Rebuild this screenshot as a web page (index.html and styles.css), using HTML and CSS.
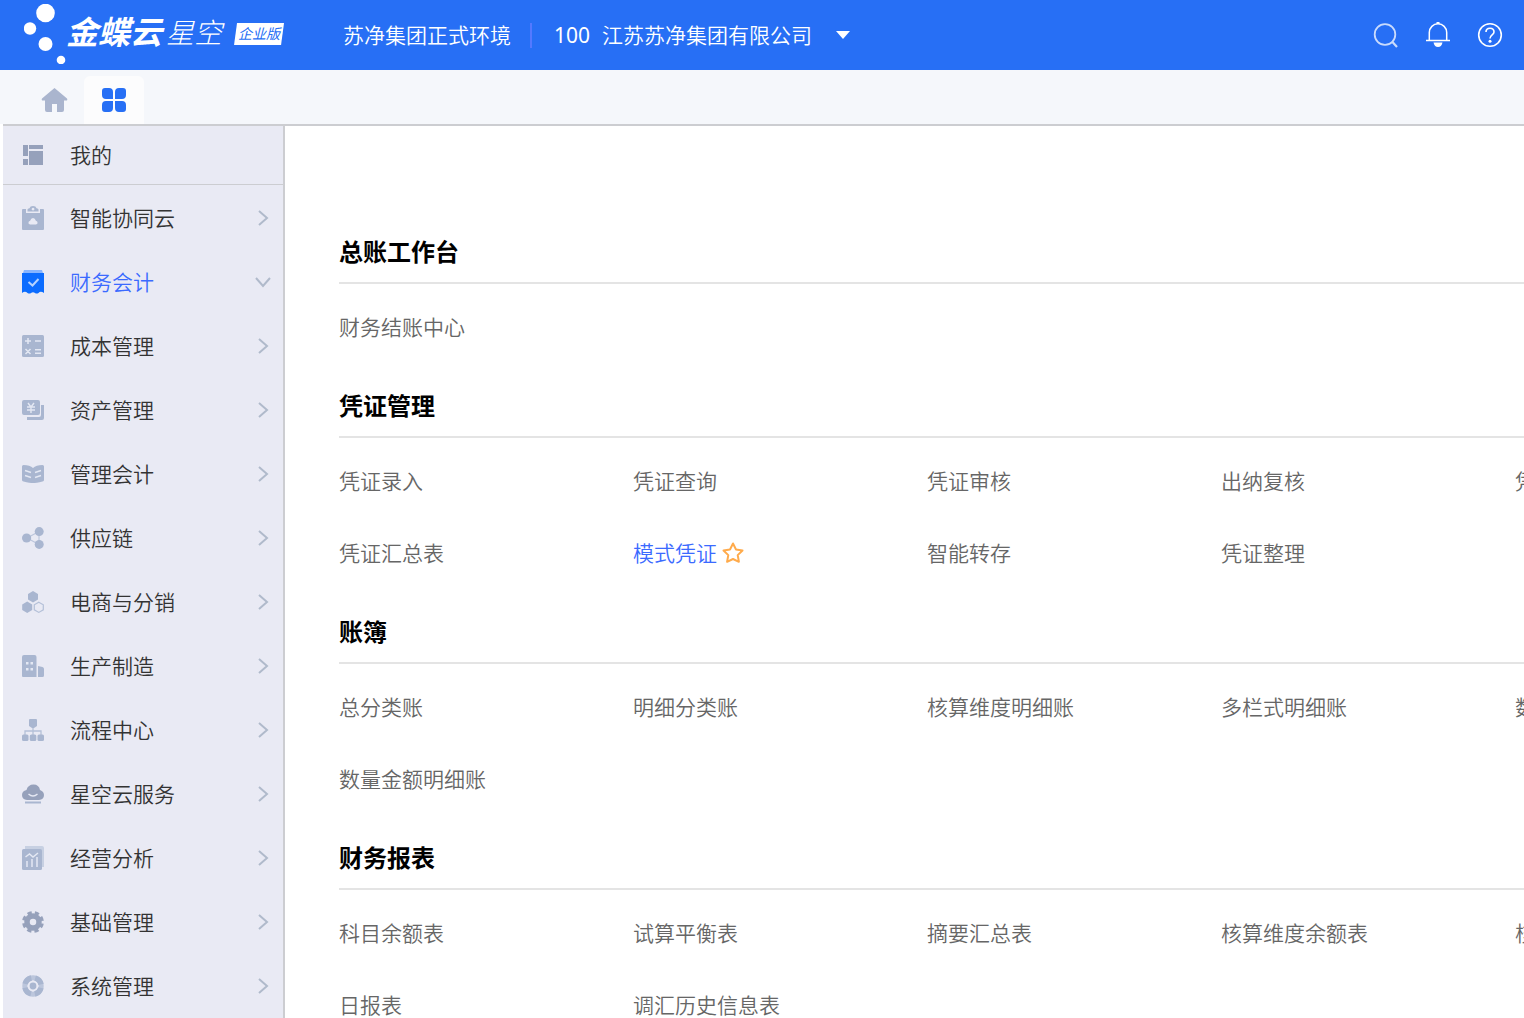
FILE: index.html
```html
<!DOCTYPE html>
<html lang="zh-CN">
<head>
<meta charset="utf-8">
<meta name="viewport" content="width=device-width, initial-scale=1">
<title>金蝶云星空</title>
<link rel="stylesheet" href="styles.css">
</head>
<body>
<svg class="defs" aria-hidden="true">
  <symbol id="right" viewBox="0 0 16 16"><path d="M4 1l8 7-8 7" fill="none" stroke="currentColor" stroke-width="2"/></symbol>
  <symbol id="down" viewBox="0 0 16 16"><path d="M1 4l7 8 7-8" fill="none" stroke="currentColor" stroke-width="2"/></symbol>
</svg>
<header class="header">
  <a class="brand" href="#">
    <svg class="brand-dots" viewBox="0 0 42 60" fill="#fff"><circle cx="21.500" cy="9" r="9.300"/><circle cx="6" cy="24.500" r="6.200"/><circle cx="21.500" cy="40" r="7"/><circle cx="37" cy="56" r="4.300"/></svg>
    <span class="brand-name">金蝶云</span>
    <span class="brand-sub">星空</span>
    <span class="brand-badge">企业版</span>
  </a>
  <span class="env">苏净集团正式环境</span>
  <button class="org" type="button"><span class="org-code">100</span><span>江苏苏净集团有限公司</span><svg class="caret" viewBox="0 0 14 8"><path d="M0 0h14L7 8z" fill="#fff"/></svg></button>
  <nav class="tools" aria-label="工具">
    <button type="button" aria-label="搜索"><svg viewBox="0 0 26 26" fill="none" stroke="#fff" opacity=".75"><circle cx="12" cy="12.500" r="10.300" stroke-width="1.800"/><path d="M19 19.500l5 5.500" stroke-width="2.200"/></svg></button>
    <button type="button" aria-label="消息"><svg viewBox="0 0 26 26" fill="none" stroke="#fff" stroke-width="1.500"><path d="M4.300 18.500V10.500a8.700 8.700 0 0 1 17.400 0v8M1 18.500h24"/><path d="M11.500 1h3" stroke-width="2"/><path d="M8.500 20.500h9q-1 4.500-4.500 4.500t-4.500-4.500z" fill="#fff" stroke="none"/></svg></button>
    <button type="button" aria-label="帮助"><svg viewBox="0 0 26 26" fill="none" stroke="#fff" stroke-width="1.600"><circle cx="13" cy="13" r="11.300"/><path d="M9 10c0-5 8-5 8 0 0 3-4 3-4 6.500"/><circle cx="13" cy="19.300" r="1.500" fill="#fff" stroke="none"/></svg></button>
  </nav>
</header>
<nav class="tabs" aria-label="页签">
  <a class="tab" href="#" aria-label="首页"><svg viewBox="0 0 26 26" fill="#aab5ce"><path d="M13.500 1L26 11.500q1 2-1 2H23V23q0 2-2 2h-5v-8h-5v8H6q-2 0-2-2v-9.500H2q-2 0-1-2z"/></svg></a>
  <a class="tab tab-active" href="#" aria-label="全部应用"><svg viewBox="0 0 26 26" fill="#276ff5"><path d="M4 1h4q4 0 4 4v7H5q-4 0-4-4V4q0-3 3-3zM22 1h-4q-4 0-4 4v7h7q4 0 4-4V4q0-3-3-3zM4 25h4q4 0 4-4v-7H5q-4 0-4 4v4q0 3 3 3zM22 25h-4q-4 0-4-4v-7h7q4 0 4 4v4q0 3-3 3z"/></svg></a>
</nav>
<div class="body">
  <nav class="side" aria-label="应用菜单">
    <a class="item item-mine" href="#"><svg class="icon" viewBox="0 0 22 22" fill="#96a1bb"><path d="M1 1h5v11H1zM1 15h5v6H1zM7 1h14v4H7zM7 7h14v14H7z"/></svg><span>我的</span></a>
    <a class="item" href="#"><svg class="icon" viewBox="0 0 22 24"><path fill="#a9b6d0" d="M1 3h3v4h14V3h3q1 0 1 1v19q0 1-1 1H1q-1 0-1-1V4q0-1 1-1z"/><path fill="#a9b6d0" fill-rule="evenodd" d="M5.500 5.500V3.500q0-1 2-1.200Q8 0 11 0t3.500 2.300q2 .2 2 1.200v2zM11 1.700a1.400 1.400 0 1 0 .1 0z"/><path fill="#e9eaf4" d="M8 18.500q-2-.5-1.500-2.200.3-1.200 1.500-1.200Q9 12 11 12t3 3.100q1.200 0 1.500 1.200.5 1.700-1.500 2.200z"/></svg><span>智能协同云</span><svg class="arrow"><use href="#right"/></svg></a>
    <a class="item item-active" href="#"><svg class="icon" viewBox="0 0 22 24"><path fill="#87b5ff" d="M2 0h18l1 3H1z"/><path fill="#0b6cff" d="M0 3h22v20q-3.500-2.500-5.500 0-2 1.200-3.500 0-2-1.500-4 0-1.500 1.200-3.500 0Q3 20.500 0 23z"/><path fill="none" stroke="#b4d2ff" stroke-width="2" d="M6.500 12l4 3.500 6-6.500"/></svg><span>财务会计</span><svg class="arrow"><use href="#down"/></svg></a>
    <a class="item" href="#"><svg class="icon" viewBox="0 0 22 22"><rect width="22" height="22" rx="1.500" fill="#a9b6d0"/><path stroke="#e4e8f3" stroke-width="1.500" d="M3 6h6M6 3v6M13 6h6M3.500 14l5 5M8.500 14l-5 5M13 14.800h6M13 18.200h6"/></svg><span>成本管理</span><svg class="arrow"><use href="#right"/></svg></a>
    <a class="item" href="#"><svg class="icon" viewBox="0 0 22 22"><path fill="#a9b6d0" d="M2 1h14q2 0 2 2v11q0 2-2 2H2q-2 0-2-2V3q0-2 2-2zM19 6h3v13q0 2-2 2H5v-3h12q2 0 2-2z"/><path fill="none" stroke="#e4e8f3" stroke-width="1.400" d="M6 4l3 4 3-4M5 8h8M5 11h8M9 8v6"/></svg><span>资产管理</span><svg class="arrow"><use href="#right"/></svg></a>
    <a class="item" href="#"><svg class="icon" viewBox="0 0 22 22"><path fill="#a9b6d0" d="M1.500 2Q8 2.200 11 5q3-2.800 9.500-3Q22 2 22 3.500V17q0 1.300-1.500 1.500Q14 20 11 20T1.500 18.500Q0 18.300 0 17V3.500Q0 2 1.500 2z"/><path fill="none" stroke="#e4e8f3" stroke-width="1.400" d="M3 7.500l6 2M3 12.500l6 2M19 7.500l-6 2M19 12.500l-6 2"/></svg><span>管理会计</span><svg class="arrow"><use href="#right"/></svg></a>
    <a class="item" href="#"><svg class="icon" viewBox="0 0 22 22"><path fill="none" stroke="#bcc6dc" stroke-width="1.200" d="M17 4.500L5 11l12 6.500z"/><g fill="#a9b6d0"><circle cx="17.200" cy="4.600" r="4.500"/><circle cx="4.600" cy="11" r="4.600"/><circle cx="17.200" cy="17.400" r="4.500"/></g></svg><span>供应链</span><svg class="arrow"><use href="#right"/></svg></a>
    <a class="item" href="#"><svg class="icon" viewBox="0 0 22 22"><path fill="#a9b6d0" d="M11 0l5 3v5.500l-5 3-5-3V3zM5.200 10.500l5 3V19l-5 3-5-3v-5.500z"/><path fill="none" stroke="#b4c0d8" stroke-width="1.200" d="M16.800 11.200l4.500 2.600v5l-4.500 2.600-4.500-2.600v-5z"/></svg><span>电商与分销</span><svg class="arrow"><use href="#right"/></svg></a>
    <a class="item" href="#"><svg class="icon" viewBox="0 0 22 22"><path fill="#a9b6d0" d="M2 0h10.500q2 0 2 2v20H1q-1 0-1-1V2q0-2 2-2zM16 11l4.500 1q1.500.5 1.500 2v6.500q0 1.500-1.500 1.500H16z"/><path fill="#e4e8f3" d="M4 7h2.500v2.500H4zM8.500 7H11v2.500H8.500zM4 13h2.500v2.500H4zM8.500 13H11v2.500H8.500z"/></svg><span>生产制造</span><svg class="arrow"><use href="#right"/></svg></a>
    <a class="item" href="#"><svg class="icon" viewBox="0 0 22 22"><path fill="none" stroke="#b4c0d8" stroke-width="1.300" d="M11 7v9M3 16v-4h16v4"/><g fill="#a9b6d0"><path d="M8 0h6q1 0 1 1v6l-3 2h-2L7 7V1q0-1 1-1z"/><rect y="15.500" width="6.500" height="6.500" rx="1.500"/><rect x="7.800" y="15.500" width="6.500" height="6.500" rx="1.500"/><rect x="15.500" y="15.500" width="6.500" height="6.500" rx="1.500"/></g></svg><span>流程中心</span><svg class="arrow"><use href="#right"/></svg></a>
    <a class="item" href="#"><svg class="icon" viewBox="0 0 22 22"><path fill="#96a1bb" d="M5 17q-5-.5-5-5 0-4 4.500-5Q6 1.500 11.500 1.500T18 7q4 1.500 4 5 0 4.500-5 5z"/><path fill="none" stroke="#e4e8f3" stroke-width="1.400" d="M6.500 11q4.500 4 9 0"/><path stroke="#a9b6d0" stroke-width="2" d="M3 19.500h16"/></svg><span>星空云服务</span><svg class="arrow"><use href="#right"/></svg></a>
    <a class="item" href="#"><svg class="icon" viewBox="0 0 22 24"><path fill="#c7d0e2" d="M3 0h17q2 0 2 2v19h-3V3H3z"/><rect y="3" width="20" height="21" rx="1.500" fill="#a9b6d0"/><path fill="none" stroke="#e4e8f3" stroke-width="1.500" d="M3.500 11l4-3 3.500 3 5-4M5 15v6M10 13v8M15 11v10"/></svg><span>经营分析</span><svg class="arrow"><use href="#right"/></svg></a>
    <a class="item" href="#"><svg class="icon" viewBox="0 0 22 22"><circle cx="11" cy="11" r="6" fill="none" stroke="#96a1bb" stroke-width="5.500"/><circle cx="11" cy="11" r="9.200" fill="none" stroke="#96a1bb" stroke-width="3.400" stroke-dasharray="4.200 3.025" stroke-dashoffset="-1.500"/></svg><span>基础管理</span><svg class="arrow"><use href="#right"/></svg></a>
    <a class="item" href="#"><svg class="icon" viewBox="0 0 22 22"><circle cx="11" cy="11" r="8.200" fill="none" stroke="#bcc6dc" stroke-width="5"/><circle cx="11" cy="11" r="8.200" fill="none" stroke="#a9b6d0" stroke-width="5.500" stroke-dasharray="8.900 3.980" stroke-dashoffset="-2"/><circle cx="11" cy="11" r="3.400" fill="#a9b6d0"/></svg><span>系统管理</span><svg class="arrow"><use href="#right"/></svg></a>
  </nav>
  <main class="main">
    <section class="group">
      <h2>总账工作台</h2>
      <ul><li><a href="#">财务结账中心</a></li></ul>
    </section>
    <section class="group">
      <h2>凭证管理</h2>
      <ul>
        <li><a href="#">凭证录入</a></li><li><a href="#">凭证查询</a></li><li><a href="#">凭证审核</a></li><li><a href="#">出纳复核</a></li><li><a href="#">凭</a></li>
        <li><a href="#">凭证汇总表</a></li><li><a class="current" href="#">模式凭证</a><button class="star" type="button" aria-label="收藏"><svg viewBox="0 0 22 22"><path fill="none" stroke="#ffab4c" stroke-width="2" stroke-linejoin="round" d="M11 1.500l3 6 6.500 1-4.800 4.600 1.200 6.700L11 17l-5.900 2.800 1.200-6.700L1.500 8.500l6.500-1z"/></svg></button></li><li><a href="#">智能转存</a></li><li><a href="#">凭证整理</a></li>
      </ul>
    </section>
    <section class="group">
      <h2>账簿</h2>
      <ul>
        <li><a href="#">总分类账</a></li><li><a href="#">明细分类账</a></li><li><a href="#">核算维度明细账</a></li><li><a href="#">多栏式明细账</a></li><li><a href="#">数</a></li>
        <li><a href="#">数量金额明细账</a></li>
      </ul>
    </section>
    <section class="group">
      <h2>财务报表</h2>
      <ul>
        <li><a href="#">科目余额表</a></li><li><a href="#">试算平衡表</a></li><li><a href="#">摘要汇总表</a></li><li><a href="#">核算维度余额表</a></li><li><a href="#">核</a></li>
        <li><a href="#">日报表</a></li><li><a href="#">调汇历史信息表</a></li>
      </ul>
    </section>
  </main>
</div>
</body>
</html>
```
FILE: styles.css
```css
* { box-sizing: border-box; }
body {
  margin: 0;
  height: 100vh;
  display: flex;
  flex-direction: column;
  overflow: hidden;
  background: #fff;
  color: #333;
  font: 350 21px/32px "Noto Sans", "Noto Sans CJK SC", sans-serif;
}
a { color: inherit; text-decoration: none; }
button { border: 0; padding: 0; background: none; color: inherit; font: inherit; cursor: pointer; }
svg { display: block; flex: none; }
.defs { position: absolute; width: 0; height: 0; }

.header {
  flex: none;
  height: 70px;
  padding: 0 21px 0 24px;
  display: flex;
  align-items: center;
  background: #276ff5;
  color: #fff;
  white-space: nowrap;
}
.brand { display: flex; align-items: center; height: 70px; padding-bottom: 2px; margin-right: 59px; }
.brand-dots { width: 42px; height: 60px; }
.brand-name { padding-bottom: 4px; font-size: 32px; font-weight: 700; font-style: italic; }
.brand-sub { padding-bottom: 4px; margin-left: 4px; font-size: 28px; font-weight: 300; font-style: italic; }
.brand-badge {
  width: 50px;
  margin-left: 12px;
  background: #fff;
  color: #276ff5;
  clip-path: polygon(6% 0, 100% 0, 94% 100%, 0 100%);
  font-size: 14px;
  line-height: 22px;
  font-weight: 400;
  font-style: italic;
  text-align: center;
}
.env { padding-right: 19px; }
.org { display: flex; align-items: center; gap: 12px; }
.org::before { content: ""; width: 2px; height: 25px; margin-right: 10px; background: #5479ff; }
.org-code { font-weight: 400; }
.caret { width: 14px; height: 8px; margin-left: 12px; }
.tools { margin-left: auto; display: flex; gap: 26px; }
.tools svg { width: 26px; height: 26px; }

.tabs {
  flex: none;
  height: 54px;
  padding: 6px 0 0 24px;
  display: flex;
  background: #f5f7fb;
}
.tab { width: 60px; display: flex; align-items: center; justify-content: center; border-radius: 6px 6px 0 0; }
.tab svg { width: 26px; height: 26px; overflow: visible; }
.tab-active { background: #fcfcfd; }

.body { flex: 1; min-height: 0; margin-left: 3px; display: flex; border-top: 2px solid #cccdd1; }
.side { flex: none; width: 282px; overflow: hidden; background: #e9eaf4; border-right: 2px solid #cccdd1; }
.item { height: 64px; padding: 0 12px 0 19px; display: flex; align-items: center; }
.item-mine { height: 59px; margin-bottom: 1px; border-bottom: 1px solid #cccdd1; }
.item-active { color: #3b6aff; }
.icon { width: 22px; height: 24px; margin-right: 26px; }
.arrow { width: 16px; height: 16px; margin-left: auto; color: #b0bacb; }

.main { flex: 1; min-width: 0; overflow: hidden; padding: 108px 0 0 54px; }
.group { margin-bottom: 25px; }
.group h2 {
  margin: 0 0 7px;
  padding-bottom: 12px;
  border-bottom: 2px solid #e4e4e4;
  color: #000;
  font-size: 24px;
  line-height: 36px;
  font-weight: 700;
}
.group ul {
  margin: 0;
  padding: 0;
  list-style: none;
  display: grid;
  grid-template-columns: repeat(5, 294px);
  grid-auto-rows: 72px;
}
.group li { display: flex; align-items: center; color: #666; white-space: nowrap; }
.group .current { color: #3b6aff; }
.star { margin-left: 5px; }
.star svg { width: 22px; height: 22px; }
```
